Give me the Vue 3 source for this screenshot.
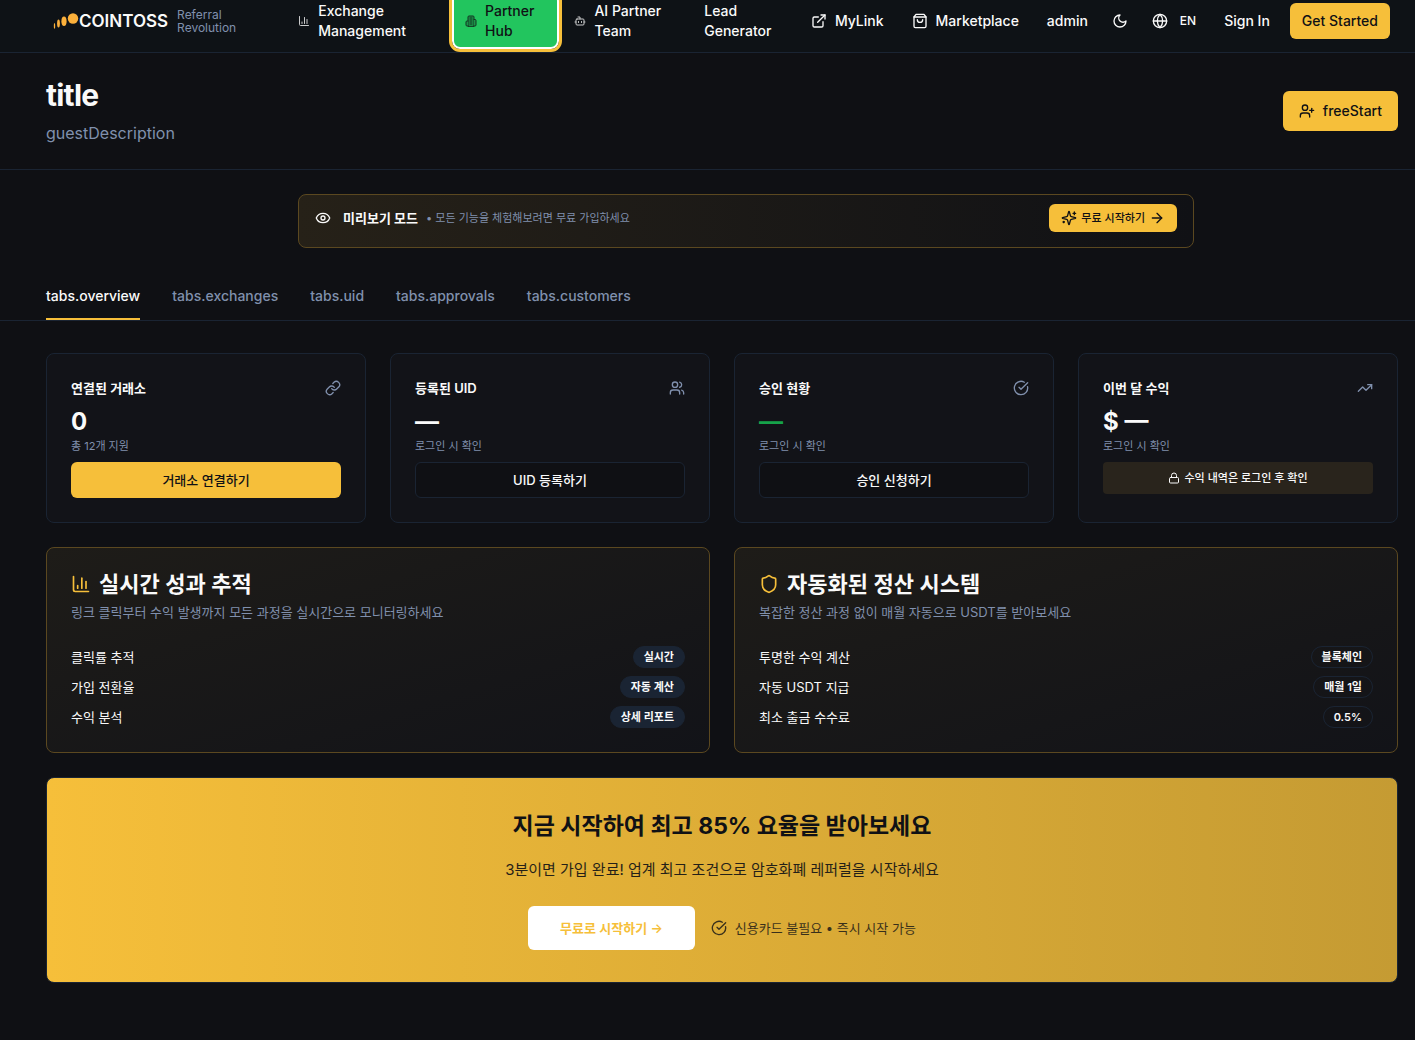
<script setup>
import { h, ref } from 'vue';

const icons = {
  chart: ['M3 3v16a2 2 0 0 0 2 2h16', 'M18 17V9', 'M13 17V5', 'M8 17v-3'],
  building: ['M6 22V4a2 2 0 0 1 2-2h8a2 2 0 0 1 2 2v18Z', 'M6 12H4a2 2 0 0 0-2 2v6a2 2 0 0 0 2 2h2', 'M18 9h2a2 2 0 0 1 2 2v9a2 2 0 0 1-2 2h-2', 'M10 6h4', 'M10 10h4', 'M10 14h4', 'M10 18h4'],
  bot: ['M12 8V4H8', 'M6 8h12a2 2 0 0 1 2 2v8a2 2 0 0 1-2 2H6a2 2 0 0 1-2-2v-8a2 2 0 0 1 2-2Z', 'M2 14h2', 'M20 14h2', 'M15 13v2', 'M9 13v2'],
  external: ['M15 3h6v6', 'M10 14 21 3', 'M18 13v6a2 2 0 0 1-2 2H5a2 2 0 0 1-2-2V8a2 2 0 0 1 2-2h6'],
  bag: ['M6 2 3 6v14a2 2 0 0 0 2 2h14a2 2 0 0 0 2-2V6l-3-4Z', 'M3 6h18', 'M16 10a4 4 0 0 1-8 0'],
  moon: ['M12 3a6 6 0 0 0 9 9 9 9 0 1 1-9-9Z'],
  globe: ['M22 12a10 10 0 1 1-20 0 10 10 0 0 1 20 0Z', 'M12 2a14.5 14.5 0 0 0 0 20 14.5 14.5 0 0 0 0-20', 'M2 12h20'],
  userPlus: ['M16 21v-2a4 4 0 0 0-4-4H6a4 4 0 0 0-4 4v2', 'M13 7a4 4 0 1 1-8 0 4 4 0 0 1 8 0Z', 'M19 8v6', 'M22 11h-6'],
  eye: ['M2.062 12.348a1 1 0 0 1 0-.696 10.75 10.75 0 0 1 19.876 0 1 1 0 0 1 0 .696 10.75 10.75 0 0 1-19.876 0', 'M15 12a3 3 0 1 1-6 0 3 3 0 0 1 6 0Z'],
  sparkles: ['M9.937 15.5A2 2 0 0 0 8.5 14.063l-6.135-1.582a.5.5 0 0 1 0-.962L8.5 9.936A2 2 0 0 0 9.937 8.5l1.582-6.135a.5.5 0 0 1 .963 0L14.063 8.5A2 2 0 0 0 15.5 9.937l6.135 1.581a.5.5 0 0 1 0 .964L15.5 14.063a2 2 0 0 0-1.437 1.437l-1.582 6.135a.5.5 0 0 1-.963 0z', 'M20 3v4', 'M22 5h-4', 'M4 17v2', 'M5 18H3'],
  arrow: ['M5 12h14', 'm12 5 7 7-7 7'],
  link: ['M10 13a5 5 0 0 0 7.54.54l3-3a5 5 0 0 0-7.07-7.07l-1.72 1.71', 'M14 11a5 5 0 0 0-7.54-.54l-3 3a5 5 0 0 0 7.07 7.07l1.71-1.71'],
  users: ['M16 21v-2a4 4 0 0 0-4-4H6a4 4 0 0 0-4 4v2', 'M13 7a4 4 0 1 1-8 0 4 4 0 0 1 8 0Z', 'M22 21v-2a4 4 0 0 0-3-3.87', 'M16 3.13a4 4 0 0 1 0 7.75'],
  check: ['M21.801 10A10 10 0 1 1 17 3.335', 'm9 11 3 3L22 4'],
  trend: ['m22 7-8.5 8.5-5-5L2 17', 'M16 7h6v6'],
  lock: ['M5 11h14a2 2 0 0 1 2 2v7a2 2 0 0 1-2 2H5a2 2 0 0 1-2-2v-7a2 2 0 0 1 2-2Z', 'M7 11V7a5 5 0 0 1 10 0v4'],
  shield: ['M20 13c0 5-3.5 7.5-7.66 8.95a1 1 0 0 1-.67-.01C7.5 20.5 4 18 4 13V6a1 1 0 0 1 1-1c2 0 4.5-1.2 6.24-2.72a1.17 1.17 0 0 1 1.52 0C14.51 3.81 17 5 19 5a1 1 0 0 1 1 1z']
}

const Icon = (props) => h('svg', {
  width: props.size,
  height: props.size,
  viewBox: '0 0 24 24',
  fill: 'none',
  stroke: 'currentColor',
  'stroke-width': 2,
  'stroke-linecap': 'round',
  'stroke-linejoin': 'round',
  'aria-hidden': 'true'
}, icons[props.name].map((d) => h('path', { d })))
Icon.props = ['name', 'size']

const menu = [
  { label: 'Exchange\nManagement', icon: 'chart' },
  { label: 'Partner\nHub', icon: 'building', active: true },
  { label: 'AI Partner\nTeam', icon: 'bot' },
  { label: 'Lead\nGenerator' }
]

const tabs = ['overview', 'exchanges', 'uid', 'approvals', 'customers']
const current = ref('overview')

const stats = [
  { title: '연결된 거래소', icon: 'link', value: '0', note: '총 12개 지원', action: '거래소 연결하기', primary: true },
  { title: '등록된 UID', icon: 'users', value: '—', note: '로그인 시 확인', action: 'UID 등록하기' },
  { title: '승인 현황', icon: 'check', value: '—', note: '로그인 시 확인', action: '승인 신청하기', green: true },
  { title: '이번 달 수익', icon: 'trend', value: '$ —', note: '로그인 시 확인', locked: '수익 내역은 로그인 후 확인' }
]

const features = [
  {
    title: '실시간 성과 추적',
    icon: 'chart',
    text: '링크 클릭부터 수익 발생까지 모든 과정을 실시간으로 모니터링하세요',
    filled: true,
    rows: [['클릭률 추적', '실시간'], ['가입 전환율', '자동 계산'], ['수익 분석', '상세 리포트']]
  },
  {
    title: '자동화된 정산 시스템',
    icon: 'shield',
    text: '복잡한 정산 과정 없이 매월 자동으로 USDT를 받아보세요',
    rows: [['투명한 수익 계산', '블록체인'], ['자동 USDT 지급', '매월 1일'], ['최소 출금 수수료', '0.5%']]
  }
]
</script>

<template>
  <div class="page">
    <header class="topbar">
      <a href="#" class="brand">
        <svg class="coins" width="26" height="18" viewBox="0 0 26 18" aria-hidden="true">
          <ellipse cx="1.5" cy="14" rx="0.7" ry="3" />
          <ellipse cx="5.5" cy="11.5" rx="1.4" ry="4" />
          <ellipse cx="11" cy="9.2" rx="2.6" ry="4.8" />
          <circle cx="20" cy="6.5" r="5.2" />
        </svg>
        <span class="wordmark">COINTOSS</span>
        <span class="slogan"><span>Referral</span><span>Revolution</span></span>
      </a>
      <nav class="menu">
        <a v-for="item in menu" :key="item.label" href="#" class="menu-item" :class="{ active: item.active }">
          <Icon v-if="item.icon" :name="item.icon" size="12" />
          <span>{{ item.label }}</span>
        </a>
      </nav>
      <div class="tools">
        <a href="#" class="tool"><Icon name="external" size="16" />MyLink</a>
        <a href="#" class="tool"><Icon name="bag" size="16" />Marketplace</a>
        <div class="prefs">
          <a href="#" class="tool">admin</a>
          <button class="plain" aria-label="Theme"><Icon name="moon" size="16" /></button>
          <button class="plain lang"><Icon name="globe" size="16" />EN</button>
        </div>
        <div class="account">
          <a href="#" class="tool">Sign In</a>
          <button class="gold">Get Started</button>
        </div>
      </div>
    </header>

    <main>
      <section class="intro">
        <div>
          <h1>title</h1>
          <p>guestDescription</p>
        </div>
        <button class="gold start"><Icon name="userPlus" size="16" />freeStart</button>
      </section>

      <section class="preview">
        <Icon name="eye" size="16" />
        <strong>미리보기 모드</strong>
        <span class="preview-note">• 모든 기능을 체험해보려면 무료 가입하세요</span>
        <button class="gold small"><Icon name="sparkles" size="16" />무료 시작하기<Icon name="arrow" size="16" /></button>
      </section>

      <nav class="tabs">
        <button v-for="tab in tabs" :key="tab" :class="{ selected: current === tab }" @click="current = tab">tabs.{{ tab }}</button>
      </nav>

      <div class="content">
        <section class="stats">
          <article v-for="stat in stats" :key="stat.title" class="card">
            <div class="card-head">
              <h3>{{ stat.title }}</h3>
              <Icon :name="stat.icon" size="16" />
            </div>
            <p class="value" :class="{ green: stat.green }">{{ stat.value }}</p>
            <p class="note">{{ stat.note }}</p>
            <div v-if="stat.locked" class="locked"><Icon name="lock" size="12" />{{ stat.locked }}</div>
            <button v-else :class="stat.primary ? 'gold' : 'outline'">{{ stat.action }}</button>
          </article>
        </section>

        <section class="features">
          <article v-for="feature in features" :key="feature.title" class="card feature">
            <h2><Icon :name="feature.icon" size="20" />{{ feature.title }}</h2>
            <p class="feature-text">{{ feature.text }}</p>
            <ul>
              <li v-for="row in feature.rows" :key="row[0]">
                <span>{{ row[0] }}</span>
                <span class="badge" :class="{ filled: feature.filled }">{{ row[1] }}</span>
              </li>
            </ul>
          </article>
        </section>

        <section class="cta">
          <h2>지금 시작하여 최고 85% 요율을 받아보세요</h2>
          <p>3분이면 가입 완료! 업계 최고 조건으로 암호화폐 레퍼럴을 시작하세요</p>
          <div class="cta-row">
            <button class="white">무료로 시작하기 →</button>
            <span class="cta-note"><Icon name="check" size="16" />신용카드 불필요 • 즉시 시작 가능</span>
          </div>
        </section>
      </div>
    </main>
  </div>
</template>

<style>
body {
  margin: 0;
  background: #0f1014;
}
</style>

<style scoped>
.page {
  min-height: 100vh;
  background: #0f1014;
  color: #fafafa;
  font-family: Inter, "Noto Sans CJK KR", sans-serif;
  font-size: 14px;
  line-height: 20px;
}

.page * {
  box-sizing: border-box;
}

h1, h2, h3, p, ul {
  margin: 0;
  padding: 0;
}

a {
  color: inherit;
  text-decoration: none;
}

svg {
  flex: none;
}

button {
  display: inline-flex;
  align-items: center;
  justify-content: center;
  border: none;
  border-radius: 6px;
  background: none;
  color: inherit;
  font: inherit;
  font-weight: 500;
  white-space: nowrap;
  cursor: pointer;
}

.topbar {
  display: flex;
  align-items: center;
  height: 53px;
  padding: 0 25px 10px 53px;
  overflow: hidden;
  background: #0e1216;
  border-bottom: 1px solid #1a2433;
  font-weight: 500;
}

.brand {
  display: flex;
  align-items: center;
}

.coins {
  fill: #fbb03b;
}

.wordmark {
  font-size: 17px;
  font-weight: 600;
}

.slogan {
  display: flex;
  flex-direction: column;
  margin-left: 9px;
  color: #8090ad;
  font-size: 12px;
  font-weight: 400;
  line-height: 13px;
}

.menu {
  display: flex;
  align-items: center;
  gap: 12px;
  margin-left: 62px;
}

.menu-item {
  display: flex;
  align-items: center;
  gap: 8px;
  padding-right: 31px;
  white-space: pre-line;
}

.menu-item svg {
  opacity: 0.8;
}

.menu-item.active {
  height: 56px;
  margin: 0 3px;
  padding: 0 23px 0 11px;
  background: #22c55e;
  border: 2px solid #fff;
  border-radius: 8px;
  outline: 3px solid #f6bf3a;
  color: #101115;
}

.menu-item.active svg {
  fill: #1a8a45;
}

.tools {
  display: flex;
  align-items: center;
  gap: 28px;
  margin-left: auto;
}

.tool {
  display: flex;
  align-items: center;
  gap: 8px;
  white-space: nowrap;
}

.prefs {
  display: flex;
  align-items: center;
  gap: 24px;
}

.account {
  display: flex;
  align-items: center;
  gap: 20px;
}

.plain {
  padding: 0;
}

.lang {
  gap: 12px;
  font-size: 12px;
}

.gold {
  height: 36px;
  padding: 0 12px;
  background: #f6bf3a;
  color: #101115;
}

.intro {
  display: flex;
  align-items: center;
  justify-content: space-between;
  padding: 24px 17px 24px 46px;
  border-bottom: 1px solid #1a2433;
}

h1 {
  margin-bottom: 8px;
  font-size: 30px;
  line-height: 36px;
  letter-spacing: -0.025em;
}

.intro p {
  color: #8090ad;
  font-size: 16px;
  line-height: 24px;
}

.start {
  gap: 8px;
  height: 40px;
  padding: 0 16px;
}

.preview {
  display: flex;
  align-items: center;
  margin: 24px 221px 0 298px;
  padding: 9px 16px 15px;
  background: linear-gradient(90deg, #262118, #101115);
  border: 1px solid #5b4820;
  border-radius: 8px;
}

.preview strong {
  margin-left: 12px;
  font-size: 13px;
  font-weight: 600;
}

.preview-note {
  margin-left: 8px;
  color: #8090ad;
  font-size: 11px;
}

.small {
  gap: 4px;
  height: 28px;
  margin-left: auto;
  font-size: 11px;
}

.tabs {
  display: flex;
  gap: 32px;
  margin-top: 38px;
  padding: 0 46px;
  border-bottom: 1px solid #1a2433;
}

.tabs button {
  padding: 0 0 12px;
  border-bottom: 2px solid transparent;
  border-radius: 0;
  color: #8090ad;
}

.tabs .selected {
  border-color: #f6bf3a;
  color: #fafafa;
}

.content {
  display: grid;
  gap: 24px;
  padding: 32px 17px 57px 46px;
}

.stats {
  display: grid;
  grid-template-columns: repeat(4, 1fr);
  gap: 24px;
}

.card {
  padding: 24px;
  background: #121318;
  border: 1px solid #1a2433;
  border-radius: 8px;
}

.card-head {
  display: flex;
  align-items: center;
  justify-content: space-between;
  margin-bottom: 8px;
  color: #8090ad;
}

.card-head h3 {
  color: #fafafa;
  font-size: 13px;
  font-weight: 600;
}

.value {
  font-size: 24px;
  font-weight: 700;
  line-height: 32px;
}

.green {
  color: #16a34a;
}

.note {
  margin-bottom: 8px;
  color: #8090ad;
  font-size: 11px;
  line-height: 16px;
}

.card button {
  width: 100%;
  font-size: 13px;
}

.outline {
  height: 36px;
  background: #0f1014;
  border: 1px solid #1a2433;
}

.locked {
  display: flex;
  align-items: center;
  justify-content: center;
  gap: 4px;
  height: 32px;
  background: #29241c;
  border-radius: 4px;
  font-size: 11px;
  font-weight: 500;
}

.features {
  display: grid;
  grid-template-columns: repeat(2, 1fr);
  gap: 24px;
}

.feature {
  background: linear-gradient(to bottom right, #1e1c18, #121318);
  border-color: #5b4820;
}

.feature h2 {
  display: flex;
  align-items: center;
  gap: 8px;
  margin-bottom: 6px;
  font-size: 22px;
  font-weight: 600;
  line-height: 24px;
}

.feature h2 svg {
  color: #f6bf3a;
}

.feature-text {
  color: #8090ad;
  font-size: 13px;
}

.feature ul {
  display: grid;
  gap: 8px;
  margin-top: 24px;
  list-style: none;
}

.feature li {
  display: flex;
  align-items: center;
  justify-content: space-between;
  font-size: 13px;
}

.badge {
  padding: 2px 10px;
  border: 1px solid #1a2433;
  border-radius: 11px;
  font-size: 11px;
  font-weight: 600;
  line-height: 16px;
}

.filled {
  background: #1a2433;
}

.cta {
  padding: 32px;
  background: linear-gradient(90deg, #f6bf3a, #c59b33);
  border: 1px solid #1a2433;
  border-radius: 8px;
  color: #101115;
  text-align: center;
}

.cta h2 {
  font-size: 23px;
  line-height: 32px;
}

.cta p {
  margin: 16px 0 24px;
  font-size: 15px;
  line-height: 24px;
  opacity: 0.9;
}

.cta-row {
  display: flex;
  align-items: center;
  justify-content: center;
  gap: 16px;
  font-size: 13px;
}

.white {
  height: 44px;
  padding: 0 32px;
  background: #fff;
  color: #f6bf3a;
  font-weight: 600;
}

.cta-note {
  display: flex;
  align-items: center;
  gap: 8px;
  opacity: 0.8;
}
</style>
